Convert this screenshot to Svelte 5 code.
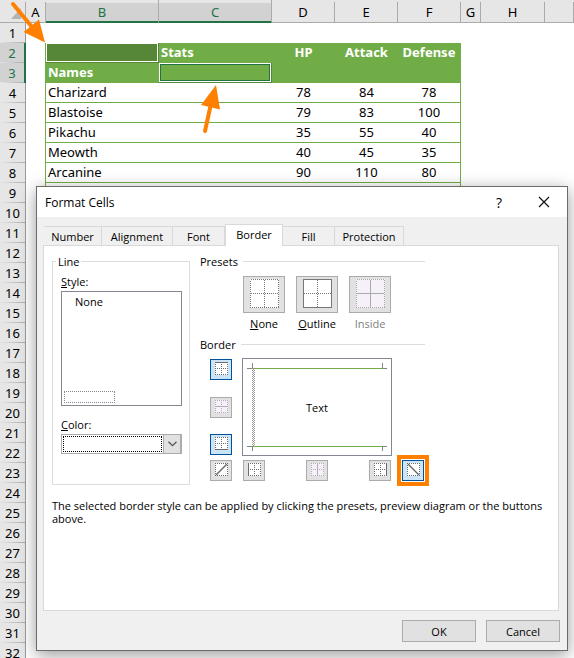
<script>
  const columns = ['A', 'B', 'C', 'D', 'E', 'F', 'G', 'H', ''];
  const records = {
    2: ['', 'Stats', 'HP', 'Attack', 'Defense'],
    3: ['Names', '', '', '', ''],
    4: ['Charizard', '', '78', '84', '78'],
    5: ['Blastoise', '', '79', '83', '100'],
    6: ['Pikachu', '', '35', '55', '40'],
    7: ['Meowth', '', '40', '45', '35'],
    8: ['Arcanine', '', '90', '110', '80'],
    9: ['', '', '', '', '']
  };
  const rows = Array.from({ length: 32 }, (_, i) => i + 1);
  const tabs = ['Number', 'Alignment', 'Font', 'Border', 'Fill', 'Protection'];
  let activeTab = $state('Border');
</script>

{#snippet preset(kind)}
  <svg width="29" height="29" viewBox="0 0 29 29" aria-hidden="true" shape-rendering="crispEdges">
    <rect width="29" height="29" fill={kind === 'inside' ? '#f6f0f8' : '#fff'} />
    <g fill="none" stroke={kind === 'inside' ? '#aaa' : '#777'}>
      <rect x=".5" y=".5" width="28" height="28" stroke-dasharray={kind === 'outline' ? 'none' : '1 1'} />
      <path d="M14.5 1V28M1 14.5H28" stroke-dasharray={kind === 'inside' ? 'none' : '1 1'} />
    </g>
  </svg>
{/snippet}

{#snippet edge(kind, off)}
  <svg width="13" height="13" viewBox="0 0 13 13" aria-hidden="true">
    <rect width="13" height="13" fill={off ? '#f6f0f8' : '#fff'} />
    <g fill="none" stroke={off ? '#b3abb5' : '#6b6b6b'}>
      <path shape-rendering="crispEdges" stroke-dasharray="1 1" d="M0 .5H13M0 12.5H13M.5 0V13M12.5 0V13" />
      {#if kind !== 'up' && kind !== 'down'}
        <path shape-rendering="crispEdges" stroke-dasharray="1 1" d="M0 6.5H13M6.5 0V13" />
      {/if}
      {#if kind === 'top'}<path d="M0 .5H13" />{/if}
      {#if kind === 'middle'}<path d="M0 6.5H13" />{/if}
      {#if kind === 'bottom'}<path d="M0 12.5H13" />{/if}
      {#if kind === 'left'}<path d="M.5 0V13" />{/if}
      {#if kind === 'center'}<path d="M6.5 0V13" />{/if}
      {#if kind === 'right'}<path d="M12.5 0V13" />{/if}
      {#if kind === 'up'}<path stroke-width="1.4" d="M1 12L12 1" />{/if}
      {#if kind === 'down'}<path stroke-width="1.4" d="M1 1L12 12" />{/if}
    </g>
  </svg>
{/snippet}

{#snippet edgeButton(kind, label, on, off)}
  <button class="edge" class:on disabled={off} class:marked={kind === 'down'} aria-label={label} aria-pressed={on}>
    {@render edge(kind, off)}
  </button>
{/snippet}

<main>
  <table class="sheet">
    <colgroup>
      <col class="w-head" /><col class="w-gap" /><col class="w-wide" /><col class="w-wide" />
      <col class="w-num" /><col class="w-num" /><col class="w-num" /><col class="w-gap" /><col class="w-std" /><col />
    </colgroup>
    <thead>
      <tr>
        <th class="corner">
          <svg width="10" height="11" viewBox="0 0 10 11" aria-hidden="true"><path d="M10 0V11H0Z" fill="#b4b4b4" /></svg>
        </th>
        {#each columns as name}
          <th class="letter" class:picked={name === 'B' || name === 'C'}>{name}</th>
        {/each}
      </tr>
    </thead>
    <tbody>
      {#each rows as n}
        <tr class:banner={n === 2 || n === 3} class:record={n > 1 && n < 10}>
          <th class="number" class:picked={n === 2 || n === 3}>{n}</th>
          <td class="margin"></td>
          {#each records[n] ?? ['', '', '', '', ''] as value, i}
            <td class="data" class:num={i > 1} class:last={i === 4}
              class:selected={n === 2 && i === 0} class:current={n === 3 && i === 1}>{value}</td>
          {/each}
          <td></td><td></td><td></td>
        </tr>
      {/each}
    </tbody>
  </table>

  <section class="dialog" role="dialog" aria-labelledby="title">
    <header>
      <h1 id="title">Format Cells</h1>
      <button class="plain help" aria-label="Help">?</button>
      <button class="plain" aria-label="Close">
        <svg width="12" height="12" viewBox="0 0 12 12" aria-hidden="true"><path d="M1 1L11 11M11 1L1 11" stroke="#111" stroke-width="1.2" /></svg>
      </button>
    </header>

    <div class="body">
      <div class="tabs" role="tablist">
        {#each tabs as tab}
          <button role="tab" class={tab.toLowerCase()} class:active={activeTab === tab} aria-selected={activeTab === tab}
            onclick={() => (activeTab = tab)}>{tab}</button>
        {/each}
      </div>

      <div class="panel" role="tabpanel">
        <div class="settings">
          <fieldset class="line">
            <legend>Line</legend>
            <div class="caption" id="style-label"><u>S</u>tyle:</div>
            <ul class="styles" role="listbox" aria-labelledby="style-label" tabindex="0">
              <li role="option" aria-selected="false">None</li>
              <li class="focus" role="option" aria-selected="true" aria-label="Thin"></li>
            </ul>
            <label class="caption" for="color"><u>C</u>olor:</label>
            <div class="combo">
              <select id="color"><option aria-label="Automatic"></option></select>
              <span class="drop">
                <svg width="9" height="6" viewBox="0 0 9 6" aria-hidden="true"><path d="M.5 .7L4.5 4.7L8.5 .7" fill="none" stroke="#555" stroke-width="1.3" /></svg>
              </span>
            </div>
          </fieldset>

          <div class="right">
            <h2>Presets</h2>
            <div class="presets">
              <label><button>{@render preset('none')}</button><span><u>N</u>one</span></label>
              <label><button>{@render preset('outline')}</button><span><u>O</u>utline</span></label>
              <label class="off"><button disabled>{@render preset('inside')}</button><span>Inside</span></label>
            </div>
            <h2>Border</h2>
            <div class="edges">
              <div class="side">
                {@render edgeButton('top', 'Top border', true, false)}
                {@render edgeButton('middle', 'Inside horizontal border', false, true)}
                {@render edgeButton('bottom', 'Bottom border', true, false)}
              </div>
              <div class="preview">
                <svg width="148" height="96" viewBox="0 0 148 96" aria-hidden="true" shape-rendering="crispEdges">
                  <defs>
                    <pattern id="hatch" width="2" height="2" patternUnits="userSpaceOnUse">
                      <path d="M0 0h1v1h-1zM1 1h1v1h-1z" fill="#999" />
                    </pattern>
                  </defs>
                  <path d="M4 9.5H10M9.5 4V10M139.5 4V10M139 9.5H144M4 87.5H10M9.5 87V92M139.5 87V92M139 87.5H144" stroke="#858585" fill="none" />
                  <path d="M10 9.5H139M10 87.5H139" stroke="#70ad47" />
                  <rect x="9" y="9" width="3" height="78" fill="url(#hatch)" />
                </svg>
                <span>Text</span>
              </div>
              <div></div>
              {@render edgeButton('up', 'Upward diagonal border', false, false)}
              <div class="under">
                {@render edgeButton('left', 'Left border', false, false)}
                {@render edgeButton('center', 'Inside vertical border', false, true)}
                {@render edgeButton('right', 'Right border', false, false)}
              </div>
              {@render edgeButton('down', 'Downward diagonal border', true, false)}
            </div>
          </div>
        </div>
        <p>The selected border style can be applied by clicking the presets, preview diagram or the buttons above.</p>
      </div>

      <footer>
        <button>OK</button>
        <button>Cancel</button>
      </footer>
    </div>
  </section>

  <svg class="arrows" width="240" height="140" viewBox="0 0 240 140" aria-hidden="true">
    <g fill="#ff8000" stroke="#ff8000">
      <path d="M13 4L32 27" stroke-width="4" stroke-linecap="round" />
      <path d="M45 42.5L23.5 32L39 19.5Z" stroke="none" />
      <path d="M205 131L210.500 106" stroke-width="4" stroke-linecap="round" />
      <path d="M216 85L201 105L220 109.500Z" stroke="none" />
    </g>
  </svg>
</main>

<style>
  :global(body) { background: #fff; }
  main {
    position: relative;
    height: 100vh;
    overflow: hidden;
    font: 11px/13px 'Open Sans', 'Noto Sans', sans-serif;
    color: #000;
  }
  * { box-sizing: border-box; }
  button { font: inherit; color: inherit; padding: 0; margin: 0; }

  .sheet {
    width: 100%;
    table-layout: fixed;
    border-collapse: separate;
    border-spacing: 0;
    font: 13px/19px 'Noto Sans', sans-serif;
  }
  .w-head { width: 26px; }
  .w-gap { width: 20px; }
  .w-wide { width: 113px; }
  .w-num { width: 63px; }
  .w-std { width: 64px; }
  .sheet th, .sheet td { padding: 0; height: 20px; white-space: nowrap; }
  .sheet th { font-weight: 400; background: #e6e6e6; }
  .sheet thead th {
    height: 23px;
    padding-top: 3px;
    border-bottom: 1px solid #999;
    border-right: 1px solid;
    border-image: linear-gradient(#e6e6e6 3px, #ababab 3px) 1;
  }
  .sheet th.corner { text-align: right; padding: 5px 4px 0 0; }
  .corner svg { display: block; margin-left: auto; }
  .sheet th.number {
    border-right: 1px solid #999;
    background: linear-gradient(90deg, #e6e6e6, #ababab) bottom / 100% 1px no-repeat #e6e6e6;
    text-align: center;
  }
  .sheet th.picked { background-color: #d2d2d2; color: #217346; }
  .sheet th.letter.picked {
    background: linear-gradient(#e6e6e6, #e6e6e6) top / 100% 3px no-repeat #d2d2d2;
    box-shadow: inset 0 -1px #217346;
    border-bottom: 1px solid #217346;
    border-image: none;
    border-right-color: #ababab;
  }
  .sheet th.number.picked { border-right: 2px solid #217346; }
  .record .margin { border-right: 1px solid #70ad47; }
  .sheet .record .data { border-bottom: 1px solid #70ad47; padding-left: 2px; }
  .sheet .record .num { text-align: center; padding: 0; }
  .record .last { border-right: 1px solid #70ad47; }
  .banner .data { background: #70ad47; color: #fff; font-weight: 700; }
  .sheet .banner .selected { background: #568736; box-shadow: inset 0 0 0 1px #fff; border-right: 1px solid #568736; border-bottom-color: #568736; }
  .sheet .banner .current { border-right: 1px solid #568736; border-bottom-color: #568736; box-shadow: inset 0 0 0 1px #fff, inset 0 0 0 2px #217346; }

  .dialog {
    position: absolute;
    top: 186px;
    left: 36px;
    right: 6px;
    border: 1px solid #6b6b6b;
    background: #f0f0f0;
    box-shadow: 0 4px 16px rgba(0, 0, 0, .4);
  }
  header { display: flex; align-items: center; height: 30px; padding: 0 8px; background: #fff; }
  h1 { flex: 1; margin: 0; font-size: 12px; font-weight: 400; }
  .plain { display: flex; align-items: center; justify-content: center; width: 30px; height: 30px; border: 0; background: none; }
  .help { font-size: 14px; margin-right: 15px; }
  .body { padding: 7px 8px 8px 6px; }
  .tabs { display: flex; align-items: flex-end; height: 21px; padding-left: 1px; }
  .tabs button { height: 19px; border: solid #d9d9d9; border-width: 1px 1px 0 0; background: #f0f0f0; }
  .tabs .active { height: 22px; margin-bottom: -1px; padding-bottom: 2px; border-left-width: 1px; background: #fff; z-index: 1; }
  .tabs .number { width: 58px; }
  .alignment { width: 71px; }
  .font { width: 52px; }
  .border { width: 58px; }
  .fill { width: 52px; }
  .protection { width: 69px; }
  .panel { min-height: 366px; padding: 9px 8px; border: 1px solid #d9d9d9; background: #fff; }
  .settings { display: flex; gap: 10px; }
  .line { width: 138px; min-width: 0; height: 230px; margin: 0; padding: 7px 7px 0 8px; border: 1px solid #dcdcdc; }
  legend { padding: 0 2px; margin-left: -5px; }
  .caption { display: block; height: 16px; }
  .styles { display: flex; flex-direction: column; justify-content: space-between; height: 115px; margin: 0 0 12px; padding: 3px 2px 2px; border: 1px solid #828790; list-style: none; }
  .styles li { padding-left: 11px; }
  .styles .focus { width: 51px; height: 12px; border: 1px dotted #888; }
  .combo { display: flex; height: 20px; border: 1px solid #ababab; padding: 1px 0 1px 1px; }
  select { flex: 1; min-width: 0; margin-right: 1px; border: 1px dotted #000; border-radius: 0; background: #fff; appearance: none; }
  .drop { display: flex; align-items: center; justify-content: center; width: 18px; margin: -1px 0; border: 1px solid #ababab; border-width: 0 1px; background: #e1e1e1; pointer-events: none; }

  .right { width: 225px; }
  h2 { display: flex; align-items: center; gap: 5px; height: 13px; margin: 0; font-size: 11px; font-weight: 400; }
  h2::after { content: ''; flex: 1; height: 1px; background: #dcdcdc; }
  .presets { display: flex; gap: 11px; height: 56px; margin: 8px 0 6px 43px; }
  .presets label { display: flex; flex-direction: column; align-items: center; gap: 4px; width: 42px; }
  .presets button { display: flex; justify-content: center; width: 42px; height: 37px; padding-top: 2px; border: 1px solid #ababab; background: #e1e1e1; }
  .off { color: #808080; }
  .edges { display: grid; grid-template-columns: 22px 150px 22px; gap: 4px 10px; margin: 7px 0 0 10px; }
  .side { display: flex; flex-direction: column; justify-content: space-between; padding: 1px 0; }
  .under { display: flex; justify-content: space-between; padding: 0 1px; }
  .edge { display: flex; justify-content: center; width: 22px; height: 21px; padding-top: 2px; border: 1px solid #ababab; background: #e1e1e1; }
  .on { border-color: #00529b; background: #cce4f7; }
  .marked { outline: 4px solid #ff8000; outline-offset: 1px; box-shadow: 0 0 0 1px #fff; }
  .preview { display: grid; height: 98px; border: 1px solid #828790; place-items: center; }
  .preview > * { grid-area: 1 / 1; }
  p { margin: 14px 0 0; }
  footer { display: flex; justify-content: flex-end; gap: 10px; padding-top: 9px; margin-right: -1px; }
  footer button { width: 74px; height: 22px; border: 1px solid #ababab; background: #e1e1e1; }
  .arrows { position: absolute; top: 0; left: 0; pointer-events: none; }
</style>
